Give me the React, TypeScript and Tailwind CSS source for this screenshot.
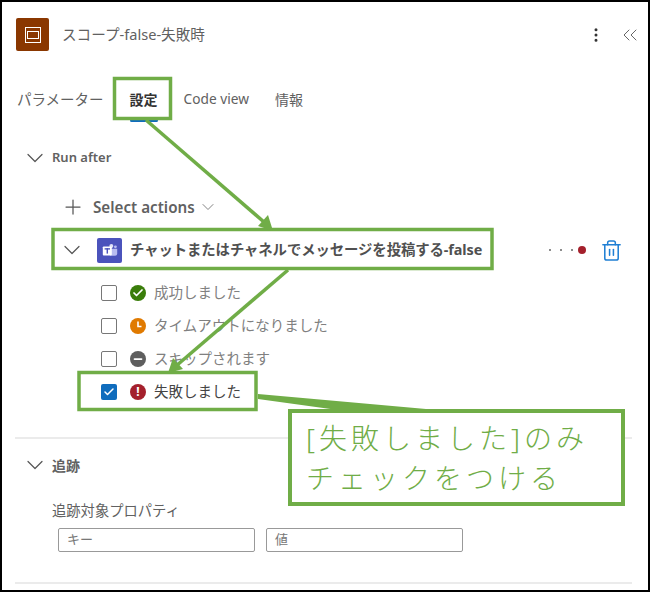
import { ChevronDown, ChevronsLeft, EllipsisVertical, Plus, Trash2, Check, Minus } from 'lucide-react';

const STATUSES = [
  { label: '成功しました', color: 'bg-[#3a7d0a]', kind: 'success' },
  { label: 'タイムアウトになりました', color: 'bg-[#e07a00]', kind: 'timeout' },
  { label: 'スキップされます', color: 'bg-[#5e5e5e]', kind: 'skip' },
  { label: '失敗しました', color: 'bg-[#a4202c]', kind: 'failed', checked: true },
];

function StatusIcon({ kind }: { kind: string }) {
  if (kind === 'success') return <Check className="h-3 w-3 text-white" strokeWidth={3.5} />;
  if (kind === 'skip') return <Minus className="h-3 w-3 text-white" strokeWidth={3.5} />;
  if (kind === 'failed') return <span className="text-[12px] font-bold leading-none text-white">!</span>;
  return (
    <svg viewBox="0 0 16 16" className="h-4 w-4">
      <path d="M8 3.5V8.5H11.5" fill="none" stroke="#fff" strokeWidth="1.6" />
    </svg>
  );
}

function TeamsIcon() {
  return (
    <div className="flex h-[25px] w-[25px] items-center justify-center rounded-[2px] bg-[#4b53bc]">
      <svg viewBox="0 0 20 20" className="h-[18px] w-[18px]">
        <circle cx="11.5" cy="5.5" r="2.2" fill="#dfe1f7" />
        <circle cx="16" cy="6.5" r="1.6" fill="#b9bdf0" />
        <path d="M9 8.5h9v5a3 3 0 0 1-3 3h-3a3 3 0 0 1-3-3z" fill="#b9bdf0" />
        <rect x="2" y="6" width="10" height="10" rx="1" fill="#fff" />
        <rect x="4" y="8" width="6" height="1.5" fill="#4b53bc" />
        <rect x="6.2" y="8" width="1.6" height="6" fill="#4b53bc" />
      </svg>
    </div>
  );
}

function Annotations() {
  return (
    <>
      <svg viewBox="0 0 650 592" className="pointer-events-none absolute left-0 top-0 h-[592px] w-[650px]">
        <g fill="none" stroke="#70ad47" strokeWidth="3.5">
          <rect x="114.5" y="78.5" width="56" height="40" />
          <rect x="53" y="229.5" width="439" height="39" />
          <rect x="79" y="372.5" width="177" height="37" />
          <path d="M146 120L264 222" />
          <path d="M288 270L176 366" />
        </g>
        <path d="M273 231L258 226L268 215z" fill="#70ad47" />
        <path d="M168 373L173 358L183 369z" fill="#70ad47" />
        <path d="M258 394L426 409L345 411L258 399z" fill="#70ad47" />
      </svg>
      <div className="absolute left-[288px] top-[409px] flex h-[97px] w-[337px] flex-col justify-center border-4 border-[#70ad47] bg-white pl-[14px] text-[28px] font-light leading-[40px] tracking-[4px] text-[#70ad47]">
        <div>[失敗しました]のみ</div>
        <div>チェックをつける</div>
      </div>
    </>
  );
}

export default function App() {
  return (
    <div className="relative box-border h-[592px] w-[650px] overflow-hidden border-2 border-black bg-white font-['Noto_Sans','Noto_Sans_CJK_JP',sans-serif] text-[#616161]">
      <div className="mt-[16px] flex h-[33px] items-center pl-[14px] pr-[6px]">
        <div className="flex h-[33px] w-[33px] items-center justify-center rounded-[2px] bg-[#8a3700]">
          <div className="flex h-[16px] w-[16px] items-center justify-center border border-white">
            <div className="h-[8px] w-[12px] border border-white" />
          </div>
        </div>
        <span className="ml-[13px] text-[14.6px]">スコープ-false-失敗時</span>
        <EllipsisVertical className="ml-auto h-[18px] w-[18px] text-[#333]" strokeWidth={2} />
        <ChevronsLeft className="ml-[13px] h-[24px] w-[24px] text-[#666]" strokeWidth={1} />
      </div>

      <div className="mt-[26px] flex h-[45px] items-center pl-[15px]">
        <span className="text-[14.5px]">パラメーター</span>
        <div className="relative ml-[26px] flex h-full items-center text-[14px] font-bold text-[#333]">
          設定
          <div className="absolute bottom-0 left-0 h-[3px] w-full rounded-sm bg-[#0f6cbd]" />
        </div>
        <span className="ml-[26px] text-[13.7px]">Code view</span>
        <span className="ml-[26px] text-[14px]">情報</span>
      </div>

      <div className="mt-[20px] flex h-[32px] items-center pl-[19px]">
        <ChevronDown className="h-[28px] w-[28px] text-[#555]" strokeWidth={1.05} />
        <span className="ml-[3px] text-[13px] font-semibold">Run after</span>
      </div>

      <div className="mt-[17px] flex h-[32px] items-center pl-[59px]">
        <Plus className="h-[24px] w-[24px] text-[#555]" strokeWidth={1.25} />
        <span className="ml-[8px] text-[15.2px] font-semibold">Select actions</span>
        <ChevronDown className="ml-[3px] h-[20px] w-[20px] text-[#777]" strokeWidth={1.1} />
      </div>

      <div className="mt-[9px] flex h-[36px] items-center pl-[56px]">
        <ChevronDown className="h-[28px] w-[28px] text-[#555]" strokeWidth={1.05} />
        <div className="ml-[11px]">
          <TeamsIcon />
        </div>
        <span className="ml-[8px] whitespace-nowrap text-[14.4px] font-bold tracking-[-0.1px] text-[#505050]">
          チャットまたはチャネルでメッセージを投稿する-false
        </span>
        <div className="ml-auto flex items-center gap-[9px]">
          <span className="h-[2px] w-[2px] rounded-full bg-[#666]" />
          <span className="h-[2px] w-[2px] rounded-full bg-[#666]" />
          <span className="h-[2px] w-[2px] rounded-full bg-[#666]" />
        </div>
        <span className="ml-[5px] h-[8px] w-[8px] rounded-full bg-[#a4202c]" />
        <Trash2 className="ml-[14px] mr-[25px] h-[23px] w-[23px] text-[#1f7fd4]" strokeWidth={1.6} />
      </div>

      <div className="mt-[8px] pl-[99px]">
        {STATUSES.map((s) => (
          <div key={s.kind} className="flex h-[33px] items-center">
            {s.checked ? (
              <div className="flex h-[16px] w-[16px] items-center justify-center rounded-[2px] bg-[#0f6cbd]">
                <Check className="h-3 w-3 text-white" strokeWidth={3} />
              </div>
            ) : (
              <div className="h-[16px] w-[16px] rounded-[2px] border border-[#777]" />
            )}
            <div className={`ml-[13px] flex h-[16px] w-[16px] items-center justify-center rounded-full ${s.color}`}>
              <StatusIcon kind={s.kind} />
            </div>
            <span className={`ml-[8px] text-[14.5px] ${s.checked ? 'text-[#444]' : 'text-[#808080]'}`}>{s.label}</span>
          </div>
        ))}
      </div>

      <div className="ml-[13px] mt-[29px] h-[2px] w-[617px] bg-[#ebebeb]" />

      <div className="mt-[10px] flex h-[32px] items-center pl-[19px]">
        <ChevronDown className="h-[28px] w-[28px] text-[#555]" strokeWidth={1.05} />
        <span className="ml-[3px] text-[14px] font-semibold">追跡</span>
      </div>

      <div className="mt-[20px] flex h-[20px] items-center pl-[50px] text-[14.3px]">追跡対象プロパティ</div>

      <div className="mt-[7px] flex gap-[11px] pl-[56px]">
        <div className="flex h-[24px] w-[197px] items-center rounded-[2px] border border-[#999] pl-[8px] text-[13px] text-[#777]">キー</div>
        <div className="flex h-[24px] w-[197px] items-center rounded-[2px] border border-[#999] pl-[8px] text-[13px] text-[#777]">値</div>
      </div>

      <div className="ml-[13px] mt-[30px] h-[2px] w-[617px] bg-[#ebebeb]" />

      <div className="absolute -left-[2px] -top-[2px]">
        <Annotations />
      </div>
    </div>
  );
}
